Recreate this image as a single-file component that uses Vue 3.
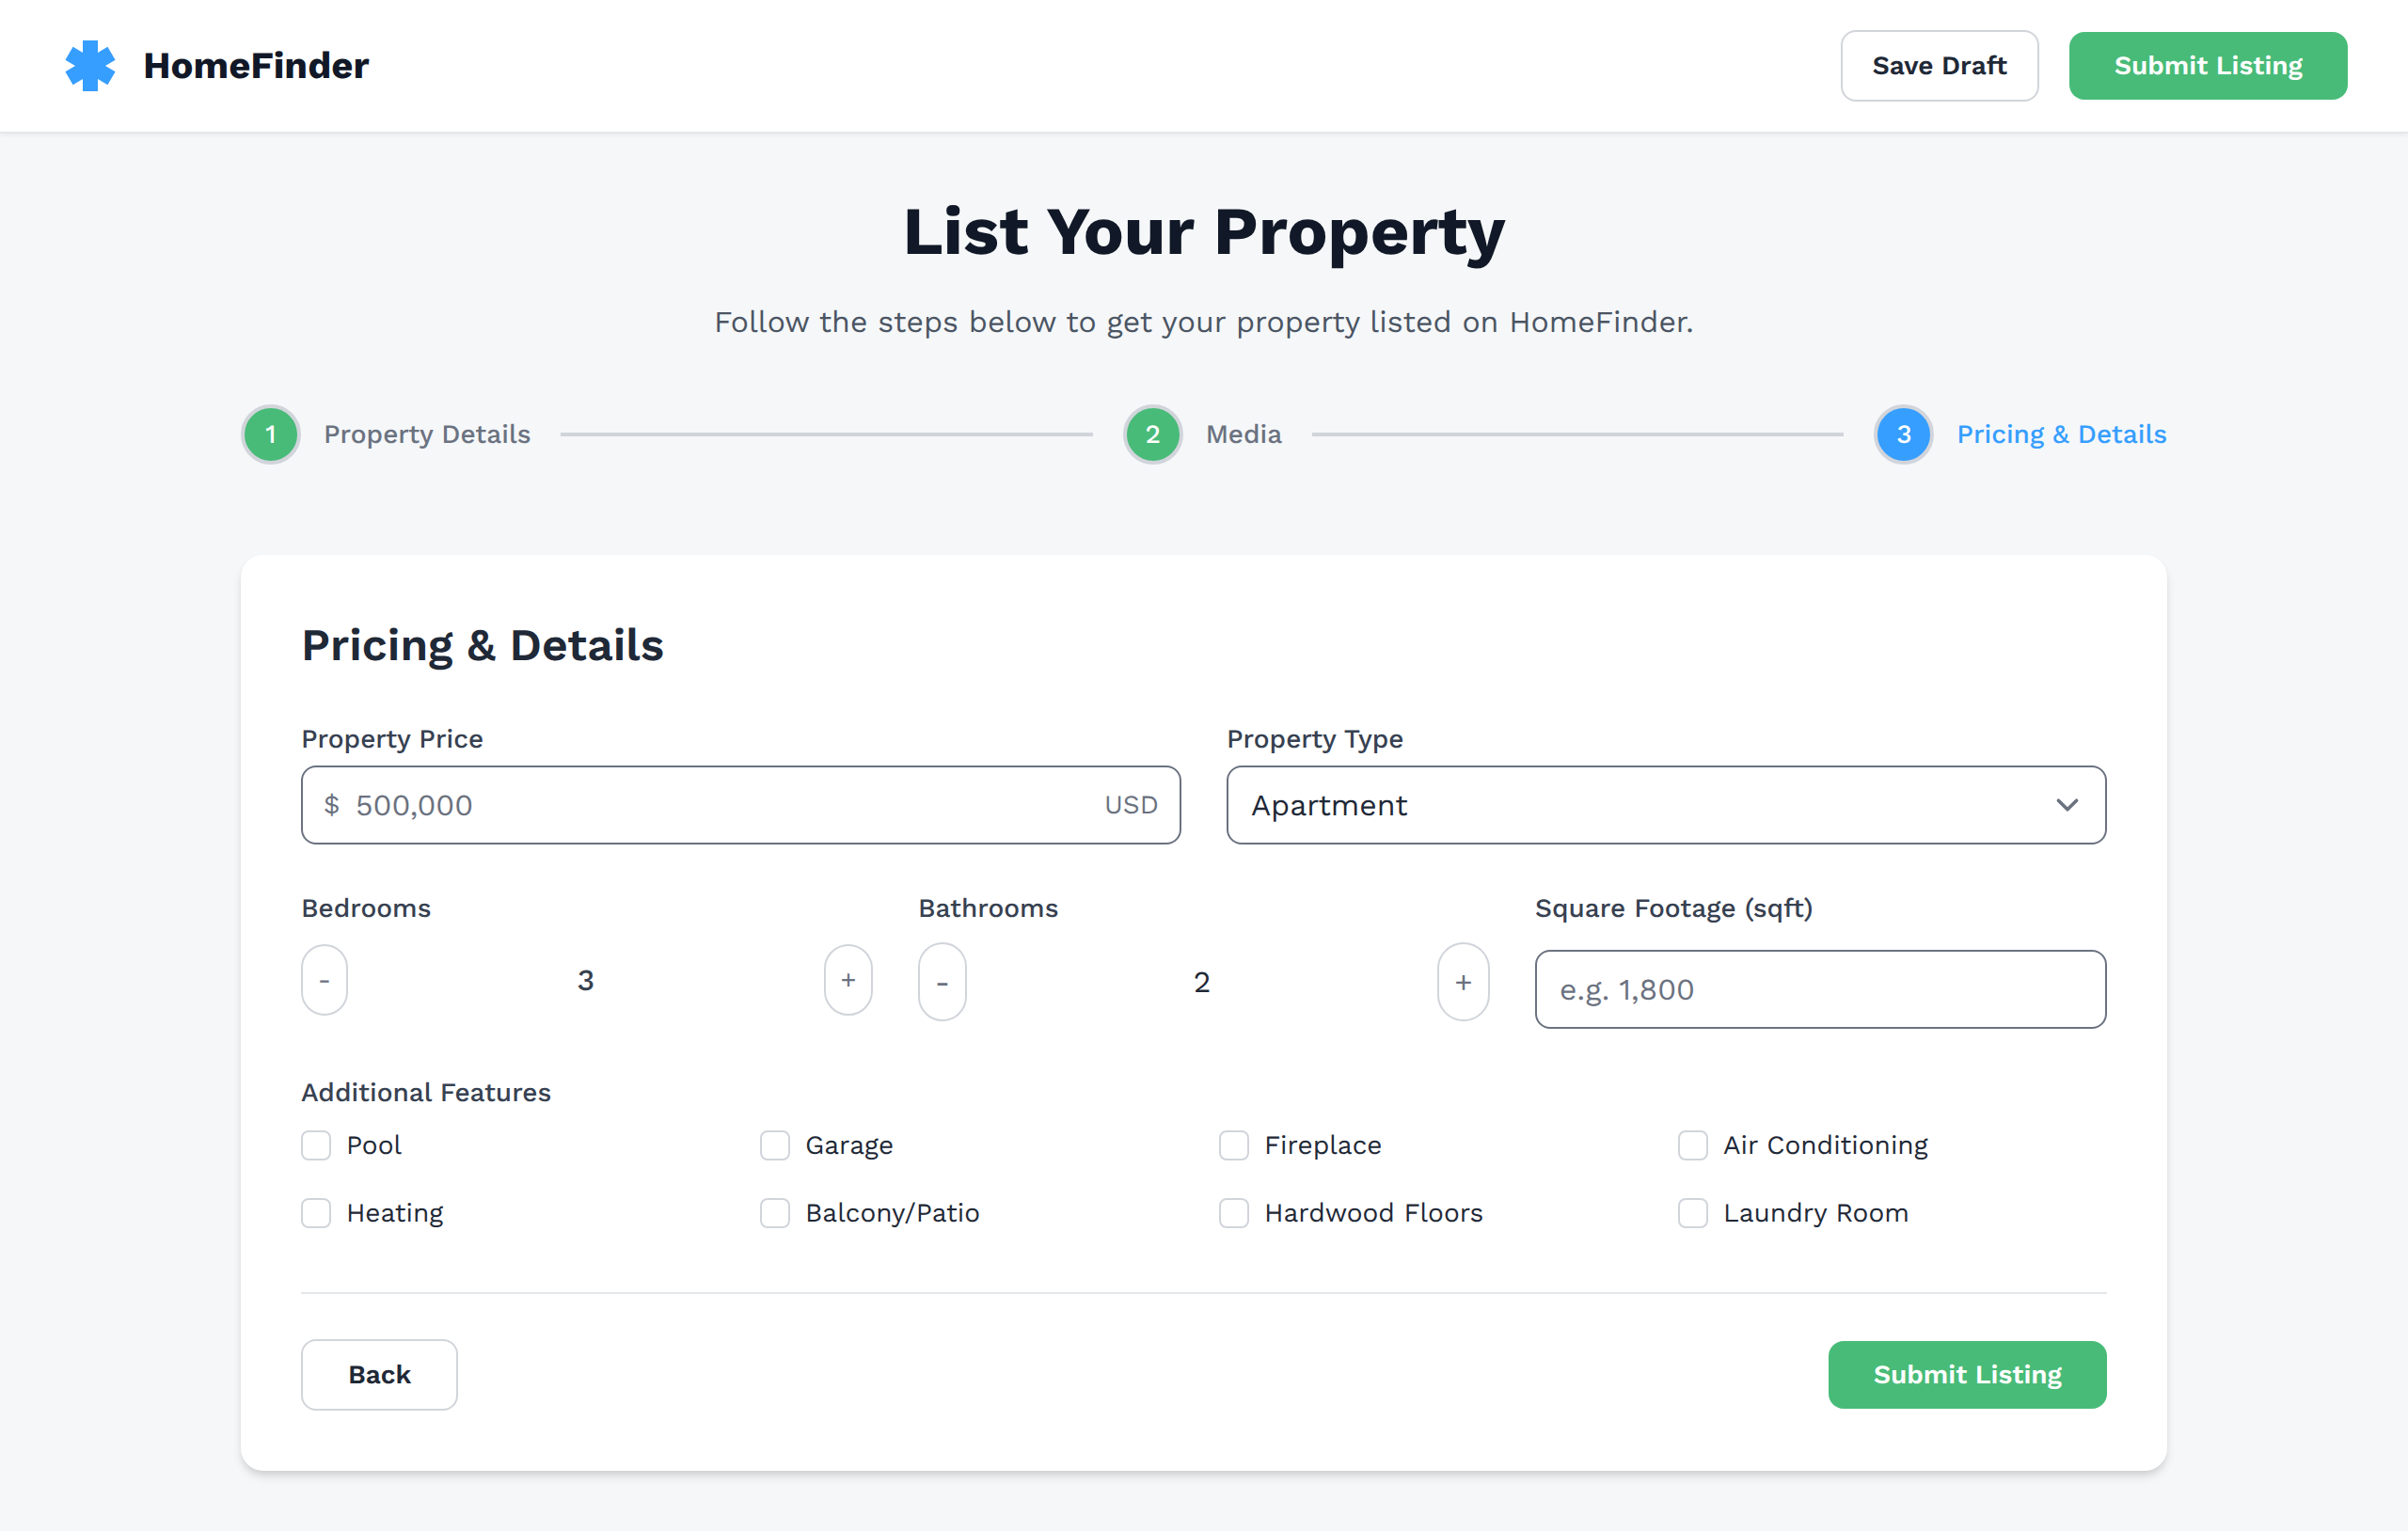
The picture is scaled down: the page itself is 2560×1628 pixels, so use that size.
<script setup>
import { ref } from 'vue'

const steps = [
  { number: 1, label: 'Property Details', state: 'done' },
  { number: 2, label: 'Media', state: 'done' },
  { number: 3, label: 'Pricing & Details', state: 'current' },
]

const features = [
  'Pool',
  'Garage',
  'Fireplace',
  'Air Conditioning',
  'Heating',
  'Balcony/Patio',
  'Hardwood Floors',
  'Laundry Room',
]

const price = ref('')
const propertyType = ref('Apartment')
const bedrooms = ref(3)
const bathrooms = ref(2)
const squareFootage = ref('')
const selected = ref([])
</script>

<template>
  <div class="page">
    <header class="topbar">
      <div class="brand">
        <svg class="brand-mark" viewBox="-32 -32 64 64" aria-hidden="true">
          <path
            fill="currentColor"
            d="M-8-27H8V-14L18.4-20.3 26.6-6.3 16 0 26.6 6.3 18.4 20.3 8 14V27H-8V14L-18.4 20.3-26.6 6.3-16 0-26.6-6.3-18.4-20.3-8-14Z"
          />
        </svg>
        <span class="brand-name">HomeFinder</span>
      </div>
      <div class="topbar-actions">
        <button type="button" class="btn btn-outline">Save Draft</button>
        <button type="submit" form="listing" class="btn btn-primary">Submit Listing</button>
      </div>
    </header>

    <main class="content">
      <h1 class="title">List Your Property</h1>
      <p class="subtitle">Follow the steps below to get your property listed on HomeFinder.</p>

      <ol class="steps">
        <template v-for="(step, i) in steps" :key="step.number">
          <li v-if="i > 0" class="step-line" role="presentation"></li>
          <li class="step" :class="step.state">
            <span class="step-number">{{ step.number }}</span>
            <span class="step-label">{{ step.label }}</span>
          </li>
        </template>
      </ol>

      <form id="listing" class="card" @submit.prevent>
        <h2 class="card-title">Pricing &amp; Details</h2>

        <div class="row row-two">
          <div class="field">
            <label class="label" for="price">Property Price</label>
            <div class="control">
              <span class="prefix">$</span>
              <input id="price" v-model="price" class="input with-prefix" type="text" placeholder="500,000" />
              <span class="suffix">USD</span>
            </div>
          </div>
          <div class="field">
            <label class="label" for="type">Property Type</label>
            <div class="control">
              <select id="type" v-model="propertyType" class="input select">
                <option>Apartment</option>
                <option>House</option>
                <option>Condo</option>
              </select>
              <svg class="chevron" viewBox="0 0 20 20" aria-hidden="true">
                <path d="M6 8l4 4 4-4" />
              </svg>
            </div>
          </div>
        </div>

        <div class="row row-three">
          <div class="field field-counter" role="group" aria-labelledby="bedrooms-label">
            <span id="bedrooms-label" class="label">Bedrooms</span>
            <div class="counter">
              <button type="button" class="count-btn" aria-label="Fewer bedrooms" @click="bedrooms--">-</button>
              <output class="count">{{ bedrooms }}</output>
              <button type="button" class="count-btn plus" aria-label="More bedrooms" @click="bedrooms++">+</button>
            </div>
          </div>
          <div class="field field-counter" role="group" aria-labelledby="bathrooms-label">
            <span id="bathrooms-label" class="label">Bathrooms</span>
            <div class="counter large">
              <button type="button" class="count-btn" aria-label="Fewer bathrooms" @click="bathrooms--">-</button>
              <output class="count">{{ bathrooms }}</output>
              <button type="button" class="count-btn plus" aria-label="More bathrooms" @click="bathrooms++">+</button>
            </div>
          </div>
          <div class="field field-area">
            <label class="label" for="sqft">Square Footage (sqft)</label>
            <input id="sqft" v-model="squareFootage" class="input" type="text" placeholder="e.g. 1,800" />
          </div>
        </div>

        <fieldset class="features">
          <legend class="label">Additional Features</legend>
          <div class="feature-grid">
            <label v-for="feature in features" :key="feature" class="feature">
              <input v-model="selected" class="checkbox" type="checkbox" :value="feature" />
              <span>{{ feature }}</span>
            </label>
          </div>
        </fieldset>

        <div class="card-actions">
          <button type="button" class="btn btn-outline btn-back">Back</button>
          <button type="submit" class="btn btn-primary">Submit Listing</button>
        </div>
      </form>
    </main>
  </div>
</template>

<style>
body {
  margin: 0;
  background: #f5f7f9;
}
</style>

<style scoped>
* {
  box-sizing: border-box;
}

.page {
  min-height: 100vh;
  background: #f5f7f9;
  color: #1f2937;
  font-family: 'Work Sans', Inter, sans-serif;
  font-size: 28px;
  line-height: 40px;
  text-rendering: geometricPrecision;
}

button,
input,
select {
  font-family: inherit;
  text-rendering: inherit;
}

.topbar {
  display: flex;
  align-items: center;
  justify-content: space-between;
  padding: 32px 64px;
  background: #fff;
  border-bottom: 2px solid #e5e7eb;
  box-shadow: 0 2px 4px rgba(0, 0, 0, 0.05);
}

.brand {
  display: flex;
  align-items: center;
  gap: 24px;
}

.brand-mark {
  width: 64px;
  height: 64px;
  color: #369eff;
}

.brand-name {
  color: #111827;
  font-size: 40px;
  font-weight: 700;
  line-height: 56px;
}

.topbar-actions {
  display: flex;
  align-items: center;
  gap: 32px;
}

.btn {
  padding: 16px 32px;
  border: 0;
  border-radius: 16px;
  font-size: 28px;
  font-weight: 600;
  line-height: 40px;
  cursor: pointer;
}

.btn-outline {
  border: 2px solid #d1d5db;
  background: #fff;
  color: #1f2937;
}

.btn-primary {
  padding: 16px 48px;
  background: #48bb78;
  color: #fff;
}

.btn-back {
  padding: 16px 48px;
}

.content {
  max-width: 2176px;
  margin: 0 auto;
  padding: 64px;
}

.title {
  margin: 0 0 32px;
  color: #111827;
  font-size: 72px;
  font-weight: 700;
  line-height: 80px;
  text-align: center;
}

.subtitle {
  margin: 0 0 64px;
  color: #4b5563;
  font-size: 32px;
  line-height: 48px;
  text-align: center;
}

.steps {
  display: flex;
  align-items: center;
  gap: 32px;
  margin: 0 0 96px;
  padding: 0;
  list-style: none;
}

.step {
  display: flex;
  align-items: center;
  gap: 24px;
  color: #6b7280;
  font-weight: 500;
}

.step-line {
  flex: 1;
  height: 4px;
  background: #d1d5db;
}

.step-number {
  display: flex;
  align-items: center;
  justify-content: center;
  width: 64px;
  height: 64px;
  border: 4px solid #d1d5db;
  border-radius: 50%;
  background: #48bb78;
  color: #fff;
}

.step.current {
  color: #369eff;
}

.step.current .step-number {
  background: #369eff;
}

.card {
  padding: 64px;
  border-radius: 24px;
  background: #fff;
  box-shadow: 0 8px 12px -2px rgba(0, 0, 0, 0.1), 0 4px 8px -2px rgba(0, 0, 0, 0.1);
}

.card-title {
  margin: 0 0 48px;
  font-size: 48px;
  font-weight: 600;
  line-height: 64px;
}

.row {
  display: grid;
  gap: 48px;
  margin-bottom: 48px;
}

.row-two {
  grid-template-columns: repeat(2, 1fr);
}

.row-three {
  grid-template-columns: repeat(3, 1fr);
}

.field {
  display: flex;
  flex-direction: column;
  gap: 8px;
  min-width: 0;
}

.field-counter {
  gap: 16px;
}

.field-area {
  gap: 24px;
}

.label {
  padding: 0;
  color: #374151;
  font-size: 28px;
  font-weight: 500;
  line-height: 40px;
}

.control {
  position: relative;
}

.input {
  display: block;
  width: 100%;
  height: 84px;
  padding: 16px 24px;
  border: 2px solid #6b7280;
  border-radius: 16px;
  background: #fff;
  color: #1f2937;
  font-size: 32px;
  line-height: 48px;
}

.input::placeholder {
  color: #6b7280;
  opacity: 1;
}

.with-prefix {
  padding-left: 56px;
  padding-right: 96px;
}

.select {
  appearance: none;
  padding-right: 80px;
}

.prefix,
.suffix {
  position: absolute;
  top: 22px;
  color: #6b7280;
  pointer-events: none;
}

.prefix {
  left: 24px;
}

.suffix {
  right: 24px;
}

.chevron {
  position: absolute;
  top: 18px;
  right: 18px;
  width: 48px;
  height: 48px;
  fill: none;
  stroke: #6b7280;
  stroke-width: 1.5;
  stroke-linecap: round;
  stroke-linejoin: round;
  pointer-events: none;
}

.counter {
  display: flex;
  align-items: center;
  justify-content: space-between;
  height: 80px;
}

.counter.large {
  height: 84px;
}

.count-btn {
  width: 50px;
  padding: 16px 0;
  border: 2px solid #d1d5db;
  border-radius: 32px;
  background: #fff;
  color: #6b7280;
  font-size: 28px;
  line-height: 40px;
  cursor: pointer;
}

.count-btn.plus {
  width: 52px;
}

.large .count-btn {
  width: 52px;
  font-size: 32px;
  line-height: 48px;
}

.large .count-btn.plus {
  width: 56px;
}

.count {
  color: #374151;
  font-size: 32px;
  font-weight: 500;
  line-height: 48px;
}

.large .count {
  color: #1f2937;
  font-weight: 400;
}

.features {
  min-width: 0;
  margin: 0;
  padding: 0;
  border: 0;
}

.feature-grid {
  display: grid;
  grid-template-columns: repeat(4, 1fr);
  gap: 32px;
  padding-top: 16px;
}

.feature {
  display: flex;
  align-items: center;
  gap: 16px;
}

.checkbox {
  appearance: none;
  width: 32px;
  height: 32px;
  margin: 0;
  border: 2px solid #d1d5db;
  border-radius: 8px;
  background: #fff;
}

.checkbox:checked {
  border-color: #369eff;
  background: #369eff;
}

.card-actions {
  display: flex;
  align-items: center;
  justify-content: space-between;
  margin-top: 64px;
  padding-top: 48px;
  border-top: 2px solid #e5e7eb;
}
</style>
